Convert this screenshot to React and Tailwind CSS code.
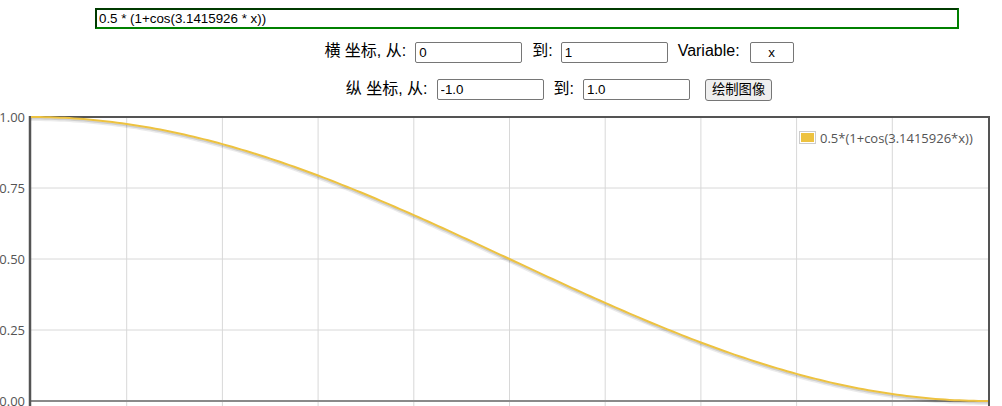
import React from "react";

const L = 31, R = 988, T = 117, B = 401;

function Chart() {
  const pts = [];
  for (let i = 0; i <= 200; i++) {
    const x = i / 200;
    const y = 0.5 * (1 + Math.cos(3.1415926 * x));
    pts.push([L + x * (R - L), B - y * (B - T)]);
  }
  const d = pts.map((p, i) => (i ? "L" : "M") + p[0].toFixed(2) + " " + p[1].toFixed(2)).join(" ");
  const vgrid = [];
  for (let k = 1; k < 10; k++) vgrid.push(L + (k * (R - L)) / 10);
  const hticks = [
    ["1.00", T],
    ["0.75", B - 0.75 * (B - T)],
    ["0.50", B - 0.5 * (B - T)],
    ["0.25", B - 0.25 * (B - T)],
    ["0.00", B],
  ];
  return (
    <svg width="1002" height="296" viewBox="0 110 1002 296" className="block">
      {vgrid.map((x) => (
        <line key={x} x1={x} y1={T} x2={x} y2={406} stroke="#d8d8d8" strokeWidth="1" />
      ))}
      {hticks.slice(1, 4).map(([t, y]) => (
        <line key={t} x1={L} y1={y} x2={R} y2={y} stroke="#d8d8d8" strokeWidth="1" />
      ))}
      {hticks.map(([t, y]) => (
        <text key={t} x="25" y={y + 4.5} textAnchor="end" fontFamily="'Open Sans', sans-serif" fontSize="13" fill="#545454">
          {t}
        </text>
      ))}
      <line x1={L} y1={B} x2={R} y2={B} stroke="#8a8a8a" strokeWidth="2" />
      <line x1={L - 1} y1={T} x2={R + 1} y2={T} stroke="#545454" strokeWidth="2" />
      <line x1={R + 1} y1={T - 1} x2={R + 1} y2={406} stroke="#545454" strokeWidth="2" />
      <line x1={L - 1} y1={T - 1} x2={L - 1} y2={406} stroke="#545454" strokeWidth="2.5" />
      <path d={d} fill="none" stroke="#000" strokeOpacity="0.08" strokeWidth="3" transform="translate(0,2.5)" />
      <path d={d} fill="none" stroke="#000" strokeOpacity="0.12" strokeWidth="2" transform="translate(0,1.5)" />
      <path d={d} fill="none" stroke="#edc240" strokeWidth="2" />
      <rect x="799.5" y="131.5" width="16" height="12" fill="#fff" stroke="#ccc" strokeWidth="1" />
      <rect x="801" y="133" width="13" height="9" fill="#edc240" />
      <text x="820" y="142.5" fontFamily="'Open Sans', sans-serif" fontSize="13" fill="#545454">
        0.5*(1+cos(3.1415926*x))
      </text>
    </svg>
  );
}

const inputCls =
  "h-[21px] border border-[#767676] rounded-[2px] px-[3px] text-[13.33px] text-black bg-white outline-none";

export default function App() {
  return (
    <div className="w-[1002px] h-[406px] overflow-hidden bg-white" style={{ fontFamily: "'Liberation Sans', Arial, 'Noto Sans CJK SC', sans-serif" }}>
      <div className="pt-[8px] pl-[95px]">
        <input
          readOnly
          value="0.5 * (1+cos(3.1415926 * x))"
          className="block w-[864px] h-[21px] border-2 border-t-[#003a00] border-l-[#003a00] border-r-[#008000] border-b-[#008000] px-[2px] text-[13.33px] text-black outline-none"
        />
      </div>
      <div className="mt-[12px] flex items-center justify-center pl-[116px] text-[16px] text-black h-[22px]">
        <span className="-mt-[2px]">横 坐标, 从:</span>
        <input readOnly value="0" className={inputCls + " ml-[9px] w-[107px]"} />
        <span className="ml-[10px] -mt-[2px]">到:</span>
        <input readOnly value="1" className={inputCls + " ml-[8px] w-[107px]"} />
        <span className="ml-[10px] -mt-[2px]">Variable:</span>
        <input readOnly value="x" className={inputCls + " ml-[10px] w-[44px] text-center"} />
      </div>
      <div className="mt-[15px] flex items-center justify-center pl-[116px] text-[16px] text-black h-[23px]">
        <span className="-mt-[2px]">纵 坐标, 从:</span>
        <input readOnly value="-1.0" className={inputCls + " ml-[9px] w-[107px]"} />
        <span className="ml-[10px] -mt-[2px]">到:</span>
        <input readOnly value="1.0" className={inputCls + " ml-[9px] w-[107px]"} />
        <button className="ml-[15px] h-[22px] px-[6px] border border-[#767676] rounded-[3px] bg-[#efefef] text-[13.33px] text-black">
          绘制图像
        </button>
      </div>
      <div className="mt-[9px]">
        <Chart />
      </div>
    </div>
  );
}
